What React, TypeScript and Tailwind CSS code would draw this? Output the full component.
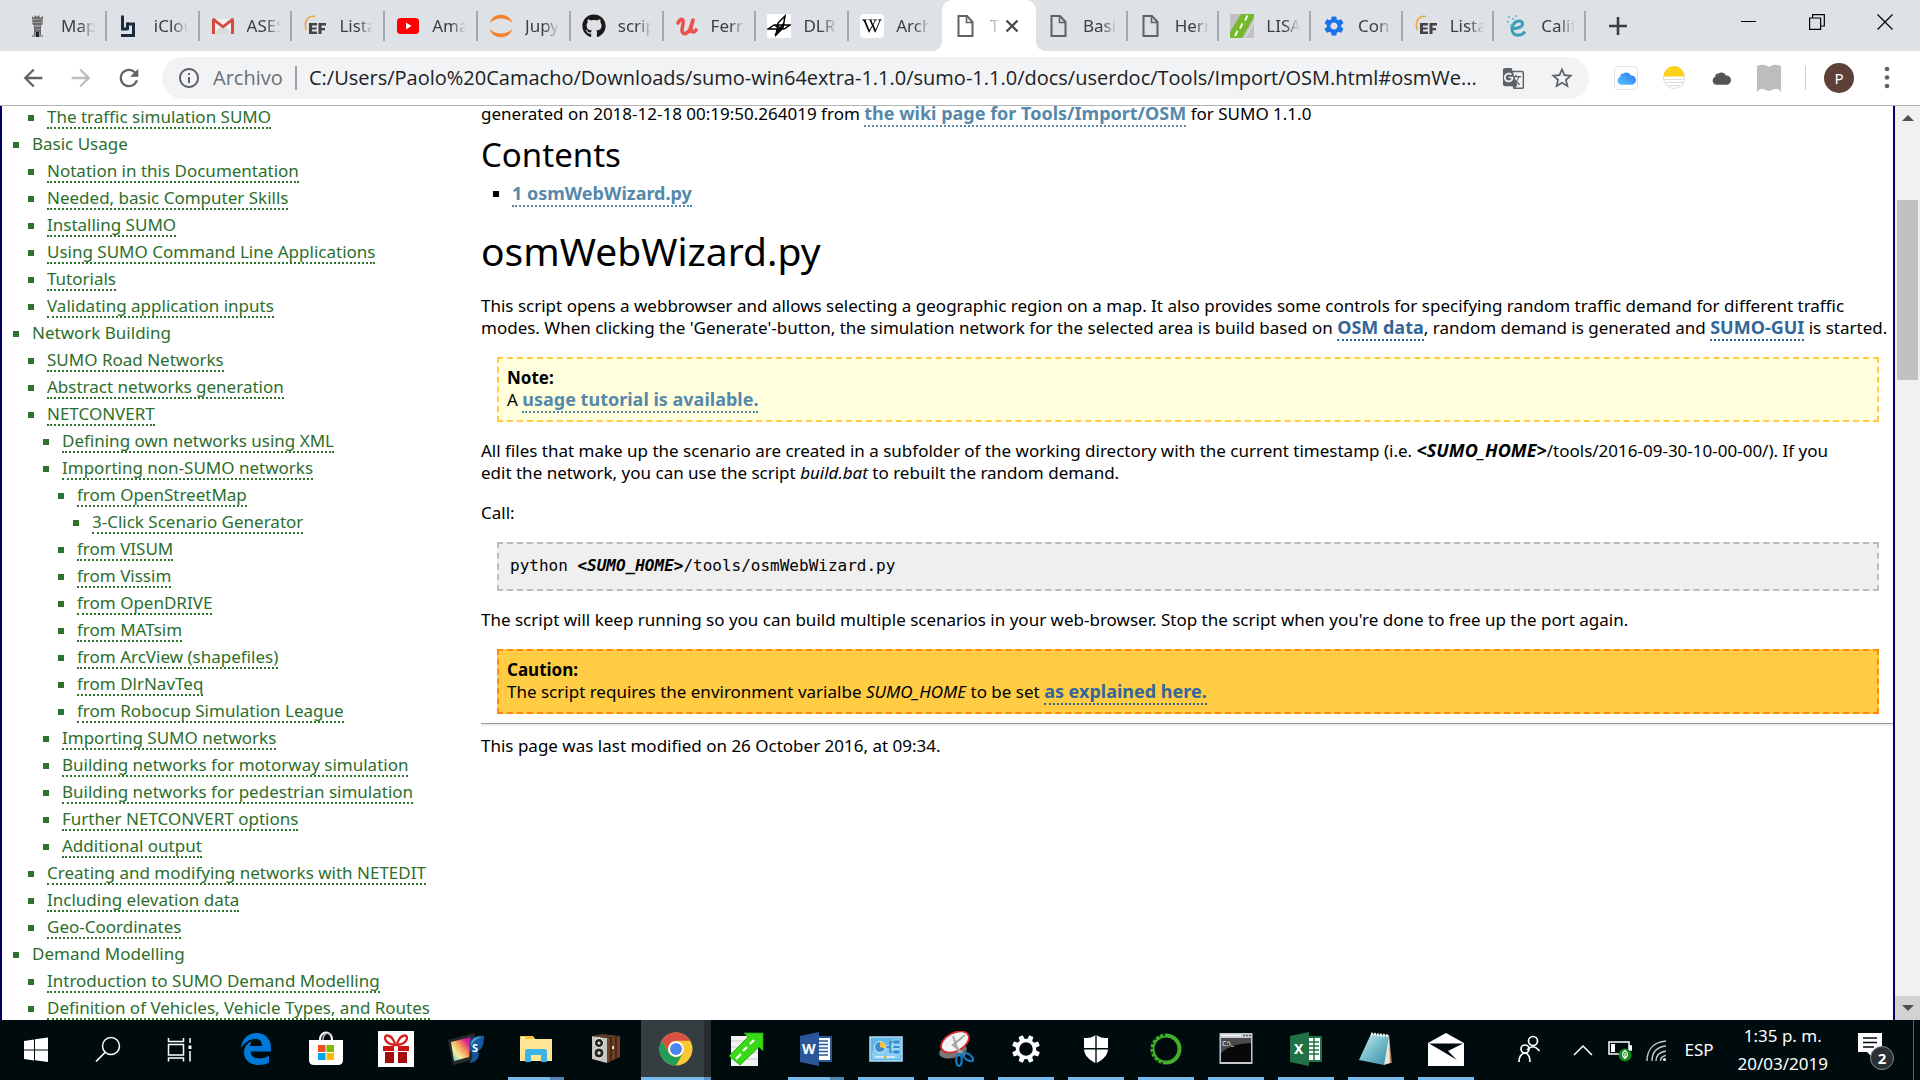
import React from 'react';
import type { ReactNode } from 'react';
import { FaGithub, FaWikipediaW } from 'react-icons/fa';
import { MdSettings, MdGTranslate, MdStarBorder, MdInfoOutline, MdRefresh, MdArrowBack, MdArrowForward } from 'react-icons/md';

/* ---------- favicons ---------- */

const TowerIcon = () => (
  <svg viewBox="0 0 24 24" className="size-6">
    <path d="M7 2l2 2 1-3 2 2 2-2 1 3 3-2v4H7z" fill="#6a6a6a" />
    <path d="M7 5h11v5l-2 2v9h2v2H7v-2h2v-9L7 10z" fill="#9a9a9a" />
    <path d="M8 7h9M8 10h9M9 14h7M9 17h7" stroke="#3c3c3c" strokeWidth="1.2" />
    <path d="M11 18h3v5h-3z" fill="#222" /><path d="M9.500 12v9M15.500 12v9" stroke="#666" />
  </svg>
);
const BlockIcon = () => (
  <svg viewBox="0 0 24 24" className="size-6" fill="#1b2a3f">
    <path d="M3 1.500h3v12h3.500v3H3z" /><path d="M9 8.500h8V23H3v-3h11v-8.500H9z" /><path d="M8 8.500h3V16H8z" />
  </svg>
);
const GmailIcon = () => (
  <svg viewBox="0 0 24 24" className="size-6">
    <path d="M2 5h20v15H2z" fill="#f1f1f1" /><path d="M2 20l8-8 2 2 2-2 8 8z" fill="#dcdcdc" />
    <path d="M1 6q0-2 2-2l9 7 9-7q2 0 2 2v14h-3V8.500l-8 6-8-6V20H1z" fill="#d54c3f" />
  </svg>
);
const EfIcon = () => (
  <svg viewBox="0 0 24 24" className="size-6">
    <path d="M12 2.500C5 1 0 8 3.500 16" fill="none" stroke="#f1a540" strokeWidth="1.600" />
    <path d="M6 9h8v2.500H9v2h4.500v2H9v2h5V20H6zM15.500 9H23v2.500h-4.500v2.500H22v2.300h-3.500V20h-3z" fill="#444" />
  </svg>
);
const YoutubeIcon = () => (
  <svg viewBox="0 0 24 24" className="size-6"><rect x="1" y="4" width="22" height="16" rx="3.500" fill="#f00" /><path d="M10 8.500v7l5.500-3.500z" fill="#fff" /></svg>
);
const JupyterIcon = () => (
  <svg viewBox="0 0 24 24" className="size-6" fill="#f5822a"><path d="M1 9C3-2 21-2 23 9 18 3 6 3 1 9z" /><path d="M1 15c2 11 20 11 22 0-5 6-17 6-22 0z" /></svg>
);
const UdemyIcon = () => (
  <svg viewBox="0 0 24 24" className="size-6" fill="none" stroke="#ea5252" strokeWidth="3.600" strokeLinecap="round" strokeLinejoin="round">
    <path d="M3 9C6 3 9 5 8 10l-1 6c0 5 5 5 8-1l3-9-2 8c0 5 3 5 5 2" />
  </svg>
);
const DlrIcon = () => (
  <svg viewBox="0 0 24 24" className="size-6">
    <rect width="24" height="24" fill="#fff" />
    <path d="M1 15l6-4h16l-6 4zM9 21l2-12 7-7-2 12zM7 11l9 4M8 21l9-12" fill="none" stroke="#000" strokeWidth="1.500" />
  </svg>
);
const WikiIcon = () => (
  <span className="flex size-6 items-center justify-center rounded bg-white"><FaWikipediaW className="size-5 text-black" /></span>
);
const DocIcon = () => (
  <svg viewBox="0 0 24 24" className="size-6" fill="none" stroke="#5f6368" strokeWidth="2"><path d="M4.500 2H13l5.500 6v14h-14z" /><path d="M12.500 2v6.500h6" strokeWidth="1.600" /></svg>
);
const RoadIcon = () => (
  <svg viewBox="0 0 24 24" className="size-6">
    <rect width="24" height="24" fill="#c3c0c3" /><path d="M0 24V18L11 0h13v3L12 24z" fill="#75b82a" />
    <path d="M5 22l2.500-5M10 14.500l2.500-5M15 6.500l2.500-5" stroke="#fff" strokeWidth="1.800" /><path d="M15 24L24 8" stroke="#e9e7e9" />
  </svg>
);
const ECircleIcon = () => (
  <svg viewBox="0 0 24 24" className="size-6" fill="none">
    <path d="M6 14.500C12 15 18 13 17.500 9.500 17 6 11 6 8 11c-3 6 1 11 6 10 3 0 5-2 6-3.500" stroke="#3f9fba" strokeWidth="3" />
    <path d="M3 3h2M7 5h2M2 8h2M10 2h2M5 11h1" stroke="#6fc4dd" strokeWidth="2" />
  </svg>
);

/* ---------- browser chrome ---------- */

type TabData = { title: string; icon: ReactNode };
const leftTabs: TabData[] = [
  { title: 'Map', icon: <TowerIcon /> },
  { title: 'iClou', icon: <BlockIcon /> },
  { title: 'ASES', icon: <GmailIcon /> },
  { title: 'Lista', icon: <EfIcon /> },
  { title: 'Ama', icon: <YoutubeIcon /> },
  { title: 'Jupy', icon: <JupyterIcon /> },
  { title: 'scrip', icon: <FaGithub className="size-6 text-[#1b1817]" /> },
  { title: 'Ferra', icon: <UdemyIcon /> },
  { title: 'DLR', icon: <DlrIcon /> },
  { title: 'Arch', icon: <WikiIcon /> },
];
const rightTabs: TabData[] = [
  { title: 'Basi', icon: <DocIcon /> },
  { title: 'Herr', icon: <DocIcon /> },
  { title: 'LISA', icon: <RoadIcon /> },
  { title: 'Con', icon: <MdSettings className="size-6 text-[#1a73e8]" /> },
  { title: 'Lista', icon: <EfIcon /> },
  { title: 'Calif', icon: <ECircleIcon /> },
];

function Tab({ tab, divider = true }: { tab: TabData; divider?: boolean }) {
  return (
    <button type="button" className="flex h-[51px] min-w-0 flex-1 items-center pl-[11px]">
      <span className="shrink-0">{tab.icon}</span>
      <span className="ml-3 w-[34px] overflow-hidden whitespace-nowrap text-left text-[17px] text-[#3c4043] [mask-image:linear-gradient(to_right,#000_55%,transparent)]">{tab.title}</span>
      <span className={divider ? 'ml-auto h-[30px] w-[2px] bg-[#a5a8ac]' : 'hidden'} />
    </button>
  );
}

function TabStrip() {
  return (
    <header className="flex h-[51px] shrink-0 bg-[#dee1e6] pl-[14px]">
      <nav aria-label="Tabs" className="flex">
        <div className="flex w-[928px]">
          {leftTabs.map((t, i) => <Tab key={i} tab={t} divider={i < leftTabs.length - 1} />)}
        </div>
        <div className="relative flex w-[94px] items-center rounded-t-[10px] bg-white pl-3">
          <span className="absolute -left-[10px] bottom-0 size-[10px] bg-[radial-gradient(circle_at_0_0,transparent_10px,#fff_10px)]" />
          <span className="absolute -right-[10px] bottom-0 size-[10px] bg-[radial-gradient(circle_at_100%_0,transparent_10px,#fff_10px)]" />
          <DocIcon />
          <span className="ml-3 w-3 overflow-hidden text-[17px] text-[#3c4043] [mask-image:linear-gradient(to_right,#0008,transparent)]">T</span>
          <button type="button" aria-label="Close tab" className="ml-[3px]">
            <svg viewBox="0 0 14 14" className="size-[14px]" stroke="#4a4d51" strokeWidth="2.400"><path d="M1.500 1.500l11 11M12.500 1.500l-11 11" /></svg>
          </button>
        </div>
        <div className="flex w-[550px]">
          {rightTabs.map((t, i) => <Tab key={i} tab={t} />)}
        </div>
      </nav>
      <button type="button" aria-label="New tab" className="ml-[23px] self-center">
        <svg viewBox="0 0 18 18" className="size-[18px]" stroke="#3c4043" strokeWidth="2.600"><path d="M9 0v18M0 9h18" /></svg>
      </button>
      <div className="ml-auto flex h-[43px] items-center gap-[52px] pr-[27px]">
        <button type="button" aria-label="Minimize"><svg viewBox="0 0 16 16" className="size-4" stroke="#000"><path d="M0 7.500h15" /></svg></button>
        <button type="button" aria-label="Restore"><svg viewBox="0 0 16 16" className="size-4" fill="none" stroke="#000" strokeWidth="1.200"><path d="M.6 4h11v11.400H.6zM3.600 4V.6h11.700V12h-3.500" /></svg></button>
        <button type="button" aria-label="Close"><svg viewBox="0 0 16 16" className="size-4" stroke="#000" strokeWidth="1.200"><path d="M.5.5l15 15M15.500.5l-15 15" /></svg></button>
      </div>
    </header>
  );
}

const cloudPath = 'M6 20a5 5 0 0 1-1-9.500A4 4 0 0 1 9 6.500 6 6 0 0 1 18 9a5.500 5.500 0 0 1 1 11z';

function Toolbar() {
  return (
    <div className="flex h-[55px] shrink-0 items-center border-b border-[#b4b4b4] bg-white pl-[19px] pr-[26px]">
      <button type="button" aria-label="Back"><MdArrowBack className="size-[28px] text-[#5f6368]" /></button>
      <button type="button" aria-label="Forward" className="ml-5"><MdArrowForward className="size-[28px] text-[#babcbe]" /></button>
      <button type="button" aria-label="Reload" className="ml-5"><MdRefresh className="size-[28px] text-[#5f6368]" /></button>
      <div className="ml-[19px] flex h-[42px] flex-1 items-center rounded-full bg-[#f1f3f4] pl-[15px] pr-[14px] font-['Open_Sans','Noto_Sans',sans-serif]">
        <MdInfoOutline className="size-6 text-[#5f6368]" />
        <label htmlFor="address" className="ml-3 w-[70px] whitespace-nowrap text-[20px] text-[#6b6f74]">Archivo</label>
        <span className="ml-3 h-6 w-[2px] bg-[#a0a3a7]" />
        <input
          id="address"
          type="text"
          className="ml-3 min-w-0 flex-1 bg-transparent text-[20px] text-[#202124] outline-none"
          defaultValue="C:/Users/Paolo%20Camacho/Downloads/sumo-win64extra-1.1.0/sumo-1.1.0/docs/userdoc/Tools/Import/OSM.html#osmWe..."
        />
        <button type="button" aria-label="Translate"><MdGTranslate className="size-[23px] text-[#5f6368]" /></button>
        <button type="button" aria-label="Bookmark" className="ml-6"><MdStarBorder className="size-[26px] text-[#5f6368]" /></button>
      </div>
      <div className="ml-[25px] flex items-center">
        <button type="button" aria-label="iCloud" className="flex size-6 items-center justify-center rounded border border-[#dfe2e8]">
          <svg viewBox="0 0 24 24" className="size-5">
            <defs><linearGradient id="cloud" x1="0" y1="1" x2="1" y2="0"><stop offset="0" stopColor="#5ac1fa" /><stop offset="1" stopColor="#2a7af5" /></linearGradient></defs>
            <path d={cloudPath} fill="url(#cloud)" />
          </svg>
        </button>
        <button type="button" aria-label="Notes" className="ml-6">
          <svg viewBox="0 0 24 24" className="size-6">
            <circle cx="12" cy="12" r="10.500" fill="#fff" stroke="#dcdcdc" />
            <path d="M1.500 10.500a10.500 10.500 0 0 1 21 0z" fill="#fdd01c" />
            <path d="M2 13.500h20M3 16.500h18M6 19.500h12" stroke="#dcdcdc" />
          </svg>
        </button>
        <button type="button" aria-label="Cloud" className="ml-[25px]">
          <svg viewBox="0 0 24 24" className="size-5"><path d={cloudPath} fill="#555" /></svg>
        </button>
        <button type="button" aria-label="Reader" className="ml-[26px]">
          <svg viewBox="0 0 24 28" className="h-[28px] w-6" fill="#bdbdbd"><path d="M0 2q7-3 12 1 5-4 12-1v26q-3-4-6-3t-6 2q-3-1-6-2t-6 3z" /></svg>
        </button>
      </div>
      <span className="ml-6 h-6 w-px bg-[#cfd1d4]" />
      <button type="button" className="ml-[18px] size-[30px] rounded-full bg-[#5d4037] text-[15px] text-white">P</button>
      <button type="button" aria-label="Menu" className="ml-[26px]">
        <svg viewBox="0 0 14 24" className="h-6 w-[14px]" fill="#5f6368"><circle cx="7" cy="3" r="2.300" /><circle cx="7" cy="11.500" r="2.300" /><circle cx="7" cy="20" r="2.300" /></svg>
      </button>
    </div>
  );
}

/* ---------- documentation page ---------- */

type Node = { label: string; plain?: boolean; children?: Node[] };
const tree: Node[] = [
  {
    label: 'Basic Usage', plain: true, children: [
      { label: 'Notation in this Documentation' },
      { label: 'Needed, basic Computer Skills' },
      { label: 'Installing SUMO' },
      { label: 'Using SUMO Command Line Applications' },
      { label: 'Tutorials' },
      { label: 'Validating application inputs' },
    ],
  },
  {
    label: 'Network Building', plain: true, children: [
      { label: 'SUMO Road Networks' },
      { label: 'Abstract networks generation' },
      {
        label: 'NETCONVERT', children: [
          { label: 'Defining own networks using XML' },
          {
            label: 'Importing non-SUMO networks', children: [
              { label: 'from OpenStreetMap', children: [{ label: '3-Click Scenario Generator' }] },
              { label: 'from VISUM' },
              { label: 'from Vissim' },
              { label: 'from OpenDRIVE' },
              { label: 'from MATsim' },
              { label: 'from ArcView (shapefiles)' },
              { label: 'from DlrNavTeq' },
              { label: 'from Robocup Simulation League' },
            ],
          },
          { label: 'Importing SUMO networks' },
          { label: 'Building networks for motorway simulation' },
          { label: 'Building networks for pedestrian simulation' },
          { label: 'Further NETCONVERT options' },
          { label: 'Additional output' },
        ],
      },
      { label: 'Creating and modifying networks with NETEDIT' },
      { label: 'Including elevation data' },
      { label: 'Geo-Coordinates' },
    ],
  },
  {
    label: 'Demand Modelling', plain: true, children: [
      { label: 'Introduction to SUMO Demand Modelling' },
      { label: 'Definition of Vehicles, Vehicle Types, and Routes' },
    ],
  },
];

function Branch({ nodes }: { nodes: Node[] }) {
  return (
    <ul className="pl-[15px]">
      {nodes.map((n) => (
        <li key={n.label}>
          <div className="flex h-[27px] items-center gap-[13px]">
            <span className="size-[6px] bg-[#2d732d]" />
            {n.plain ? <span className="pb-[2px] leading-[20px]">{n.label}</span> : <a href="#" className="border-b-2 border-dotted border-[#2d732d] leading-[20px]">{n.label}</a>}
          </div>
          {n.children && <Branch nodes={n.children} />}
        </li>
      ))}
    </ul>
  );
}

function Link({ children, dark = false }: { children: ReactNode; dark?: boolean }) {
  return (
    <a href="#" className={`border-b-2 border-dotted text-[18px] font-bold leading-[18px] ${dark ? 'border-[#336699] text-[#336699]' : 'border-[#5588aa] text-[#5588aa]'}`}>
      {children}
    </a>
  );
}

function Article() {
  return (
    <main className="-mt-[3px] min-w-0 flex-1 text-[17px] leading-[22px] text-black">
      <p>generated on 2018-12-18 00:19:50.264019 from <Link>the wiki page for Tools/Import/OSM</Link> for SUMO 1.1.0</p>
      <h2 className="mt-[10px] text-[33px] leading-[40px]">Contents</h2>
      <ul className="mt-2 pl-3">
        <li className="flex items-center gap-[13px]"><span className="size-[6px] bg-black" /><span><Link>1 osmWebWizard.py</Link></span></li>
      </ul>
      <h1 className="mt-[20px] text-[39px] leading-[52px]">osmWebWizard.py</h1>
      <p className="mt-[18px]">
        This script opens a webbrowser and allows selecting a geographic region on a map. It also provides some controls for specifying random traffic demand for different traffic modes. When clicking the 'Generate'-button, the simulation network for the selected area is build based on <Link dark>OSM data</Link>, random demand is generated and <Link dark>SUMO-GUI</Link> is started.
      </p>
      <div className="ml-4 mr-[14px] mt-[18px] border-2 border-dashed border-[#ffcc44] bg-[#ffffdd] px-2 pb-[9px] pt-2">
        <p className="font-bold">Note:</p>
        <p>A <Link>usage tutorial is available.</Link></p>
      </div>
      <p className="mt-[18px] pr-8">
        All files that make up the scenario are created in a subfolder of the working directory with the current timestamp (i.e. <b className="text-[18px] leading-[18px]"><i>&lt;SUMO_HOME&gt;</i></b>/tools/2016-09-30-10-00-00/). If you edit the network, you can use the script <i>build.bat</i> to rebuilt the random demand.
      </p>
      <p className="mt-[18px]">Call:</p>
      <pre className="ml-4 mr-[14px] mt-[18px] border-2 border-dashed border-[#bbbbbb] bg-[#efefef] px-[11px] pb-3 pt-[11px] font-['DejaVu_Sans_Mono',monospace] text-[16px] leading-[22px]">
        python <b><i>&lt;SUMO_HOME&gt;</i></b>/tools/osmWebWizard.py
      </pre>
      <p className="mt-[18px]">The script will keep running so you can build multiple scenarios in your web-browser. Stop the script when you're done to free up the port again.</p>
      <div className="ml-4 mr-[14px] mt-[18px] border-2 border-dashed border-[#ff8811] bg-[#ffcc44] px-2 pb-[9px] pt-2">
        <p className="font-bold">Caution:</p>
        <p>The script requires the environment varialbe <i>SUMO_HOME</i> to be set <Link dark>as explained here.</Link></p>
      </div>
      <hr className="mt-[9px] h-[3px] border-0 border-t border-[#999] bg-[#eee]" />
      <p className="mt-[9px]">This page was last modified on 26 October 2016, at 09:34.</p>
    </main>
  );
}

function ScrollBar() {
  return (
    <div className="flex w-[25px] shrink-0 flex-col items-center bg-[#f1f1f1]">
      <div className="flex h-6 w-full items-center justify-center"><svg viewBox="0 0 12 6" className="h-[6px] w-3" fill="#505050"><path d="M0 6L6 0l6 6z" /></svg></div>
      <div className="mt-[70px] h-[180px] w-[21px] bg-[#c1c1c1]" />
      <div className="mt-auto flex h-6 w-full items-center justify-center bg-[#d2d2d2]"><svg viewBox="0 0 12 6" className="h-[6px] w-3" fill="#505050"><path d="M0 0h12L6 6z" /></svg></div>
    </div>
  );
}

/* ---------- taskbar ---------- */

const I = ({ children, box = '0 0 36 36' }: { children: ReactNode; box?: string }) => <svg viewBox={box} className="size-9">{children}</svg>;

const WindowsIcon = () => <I><path d="M6 9l10-1.500v10H6zM17 7.300L30 5.500v12H17zM6 18.500h10v10L6 27zM17 18.500h13V30l-13-1.700z" fill="#fff" /></I>;
const SearchIcon = () => <I><circle cx="21" cy="14" r="8.500" fill="none" stroke="#fff" strokeWidth="1.500" /><path d="M15.500 20L6 29.500" stroke="#fff" strokeWidth="1.700" /></I>;
const TaskViewIcon = () => (
  <I><path d="M6.500 6v3.500h15V6M6.500 12.500h15V23h-15zM6.500 29.500V26h15v3.500M28 6v5M28 19v10.500" fill="none" stroke="#fff" strokeWidth="1.500" /><path d="M26.500 13.500h3v3.500h-3z" fill="#fff" /></I>
);
const EdgeIcon = () => (
  <I><path d="M3 17C4 7 11 2 18.500 2 28 2 33 9 33 16v4.500H12.500c.5 5 4 7 9 7 4 0 7-1.300 9.500-2.700v7C28 33.500 24.500 34 20.500 34 12 34 6 29 6 21.500c0-6 4-10 8-11.500-1.300 1.500-1.700 3-2 5H24c0-4.500-2-7-7-7-5.500 0-11 4-14 9z" fill="#0078d7" /></I>
);
const StoreIcon = () => (
  <I><path d="M12 9c0-10 12-10 12 0" fill="none" stroke="#fff" strokeWidth="2" /><path d="M15 9c0-7 6-9 9-4" fill="none" stroke="#bbb" strokeWidth="1.500" /><path d="M1 9h34v20q0 5-5 5H6q-5 0-5-5z" fill="#fff" />
    <path d="M10 14h7.500v7H10z" fill="#f25022" /><path d="M18.500 14H26v7h-7.500z" fill="#7fba00" /><path d="M10 22h7.500v7H10z" fill="#00a4ef" /><path d="M18.500 22H26v7h-7.500z" fill="#ffb900" /></I>
);
const GiftIcon = () => (
  <I><path d="M0 0h36v36H0z" fill="#fff" /><path d="M17 14C6 13 5 4 9.500 4.500 14 5 17 11 17 14zm2 0c11-1 12-10 7.500-9.500C22 5 19 11 19 14z" fill="none" stroke="#d61f1f" strokeWidth="2.300" />
    <path d="M5 15h11v5H5zm15 0h11v5H20z" fill="#c91414" /><path d="M7 21h9v11H7zm13 0h9v11h-9z" fill="#a50d0d" /></I>
);
const PaintIcon = () => (
  <I>
    <defs><linearGradient id="rainbow" x1="0" y1="1" x2="1" y2="0"><stop offset="0" stopColor="#48c9f0" /><stop offset=".3" stopColor="#f3f19a" /><stop offset=".55" stopColor="#f59a5b" /><stop offset=".8" stopColor="#e21f8d" /><stop offset="1" stopColor="#7527a8" /></linearGradient></defs>
    <path d="M0 9l27-7-2 27-20 5z" fill="#292929" /><path d="M3 11l20-5-2 20-15 4z" fill="url(#rainbow)" />
    <path d="M36 5c-13-2-18 8-13 15 3 4 1 9-2 12 9-1 11-7 9-12 5-2 6-8 6-15z" fill="#155a9e" /><path d="M34 6c-8 0-11 3-11 9 2-5 5-7 11-9z" fill="#5ea6d8" />
    <text x="24" y="21" fontSize="11" fontWeight="700" fill="#fff">S</text>
  </I>
);
const ExplorerIcon = () => (
  <I><path d="M2 6q0-1 1-1h12l2 3h17v22H2z" fill="#ffe694" /><path d="M2 6q0-1 1-1h12v3H2z" fill="#f5c431" /><path d="M3 6h4v1.500H3z" fill="#fff" /><path d="M7 31V20q0-2 2-2h18q2 0 2 2v11h-6v-7H13v7z" fill="#3db3e6" /></I>
);
const SpeakerIcon = () => (
  <I><path d="M4 5l15 2v25L4 28z" fill="#c9c5bf" /><path d="M4 5l10-2 18 2-13 2z" fill="#5b3f2c" /><path d="M19 7l13-2v21l-13 6z" fill="#6f4227" /><path d="M23 6.500v23M28 6v22" stroke="#3b2112" strokeWidth="1.500" /><path d="M24 15h2v3h-2z" fill="#ddd" />
    <circle cx="11" cy="12" r="4.500" fill="#222" stroke="#eee" /><circle cx="11" cy="22" r="5" fill="#222" stroke="#eee" /><circle cx="11" cy="12" r="1.500" fill="#ddd" /><circle cx="11" cy="22" r="1.700" fill="#ddd" /></I>
);
const ChromeIcon = () => (
  <I><circle cx="18" cy="18" r="16.500" fill="#fcc934" /><path d="M3.700 9.800A16.500 16.500 0 0 1 32.300 9.800H18A8.200 8.200 0 0 0 10.900 22z" fill="#d94f43" /><path d="M3.700 9.800L10.900 22.100A8.200 8.200 0 0 0 25.100 22.100L18 34.500A16.500 16.500 0 0 1 3.700 9.800z" fill="#249c5a" />
    <circle cx="18" cy="18" r="7.700" fill="#fff" /><circle cx="18" cy="18" r="6" fill="#4a87f0" /></I>
);
const SumoIcon = () => (
  <I><path d="M3 5h27v30H3z" fill="#f2f2f2" /><path d="M3 10h27M3 16h27M3 22h27M3 28h27" stroke="#ccc" /><path d="M1 25L20 6l-4-4h19v18l-4-4L12 34z" fill="#38d916" stroke="#1da305" strokeWidth=".8" /><path d="M8 28l5-5M15 20l4-4M22 13l4-4" stroke="#fff" strokeWidth="2.400" /></I>
);
const WordIcon = () => (
  <I><path d="M17 5h16q1 0 1 1v24q0 1-1 1H17z" fill="#2b579a" /><path d="M19 7h13v22H19z" fill="#fff" /><path d="M19 10h11M19 13.500h11M19 17h11M19 20.500h11M19 24h11" stroke="#2b579a" strokeWidth="1.500" /><path d="M2 5l19-4v34L2 31z" fill="#2b579a" />
    <text x="4" y="23" fontSize="14" fontWeight="700" fill="#fff">W</text></I>
);
const PanelIcon = () => (
  <I><rect x="2" y="6" width="32" height="24" fill="#5db8ea" stroke="#b5dcf5" strokeWidth="1.500" /><path d="M4 20L32 8v20H4z" fill="#84ccf2" /><circle cx="12" cy="16" r="5.500" fill="#3b8ed0" stroke="#d8effb" /><path d="M12 16v-5.500a5.500 5.500 0 0 1 5 7z" fill="#ffbf3d" />
    <path d="M18 16h4V11h3M22 16v5h3" stroke="#14679e" fill="none" /><path d="M25 9h7v4h-7zM25 14.500h7v3h-7zM25 19h7v4h-7z" fill="#2e8fd0" stroke="#cdeafa" strokeWidth=".7" /><path d="M7 26h20" stroke="#e7f5fd" strokeWidth="1.500" /><circle cx="17" cy="26" r="1.300" fill="#f1a12b" /></I>
);
const SnipIcon = () => (
  <I><ellipse cx="15" cy="20" rx="14" ry="7" fill="#777" transform="rotate(-12 15 20)" /><ellipse cx="17" cy="11" rx="15" ry="9" fill="#f4f4f4" stroke="#d8282f" strokeWidth="1.800" transform="rotate(-28 17 11)" />
    <path d="M15 5l7 20M27 4L15 14l12 10" stroke="#a7a7a7" strokeWidth="2" fill="none" /><ellipse cx="21" cy="29" rx="2.800" ry="6" fill="none" stroke="#1579c0" strokeWidth="2.200" /><ellipse cx="30" cy="26" rx="2.800" ry="6" fill="none" stroke="#1579c0" strokeWidth="2.200" transform="rotate(-55 30 26)" /></I>
);
const GearIcon = () => (
  <I>
    <g fill="#fff">
      {[0, 45, 90, 135, 180, 225, 270, 315].map((a) => <path key={a} d="M15.300 9L15.800 4h4.400l.5 5z" transform={`rotate(${a + 22.5} 18 18)`} />)}
    </g>
    <circle cx="18" cy="18" r="8.500" fill="none" stroke="#fff" strokeWidth="3.400" />
  </I>
);
const ShieldIcon = () => <I><path d="M17.300 4C14 7 10 7 6 7v10h11.300zM18.700 4C22 7 26 7 30 7v10H18.700zM6 18.500h11.300V32C10 28 6.500 24 6 18.500zM30 18.500H18.700V32C26 28 29.500 24 30 18.500z" fill="#fff" /></I>;
const AnacondaIcon = () => (
  <I><circle cx="18" cy="18" r="13.500" fill="none" stroke="#43b02a" strokeWidth="4" /><path d="M17 3.500C-1 4 -1 32 17 32.500" fill="none" stroke="#0a2a0a" strokeWidth="2.400" strokeDasharray="2 3" /></I>
);
const CmdIcon = () => (
  <I><rect x="1.500" y="2" width="33" height="31" fill="#c5c9d0" /><rect x="3" y="7" width="30" height="24" fill="#080808" /><path d="M3 7h30v5Q14 12 3 22z" fill="#4b4b4b" /><path d="M3 4.500h20" stroke="#f2f2f2" strokeWidth="1.500" /><path d="M25 4.500h8" stroke="#666" strokeWidth="1.500" strokeDasharray="2 1" />
    <text x="4" y="15" fontSize="7" fill="#fff">C:\_</text></I>
);
const ExcelIcon = () => (
  <I><path d="M17 5h16q1 0 1 1v24q0 1-1 1H17z" fill="#207245" /><path d="M19 7h13v22H19z" fill="#fff" /><path d="M19 11h12M19 15h12M19 19h12M19 23h12M26 7v22" stroke="#207245" strokeWidth="1.500" /><path d="M2 5l19-4v34L2 31z" fill="#207245" />
    <text x="6" y="23" fontSize="14" fontWeight="700" fill="#fff">X</text></I>
);
const NotepadIcon = () => (
  <I>
    <defs><linearGradient id="pad" x1="0" y1="0" x2="1" y2="1"><stop offset="0" stopColor="#d7f0f6" /><stop offset=".5" stopColor="#73bccb" /><stop offset="1" stopColor="#3b8ea5" /></linearGradient></defs>
    <path d="M31 4l3 28-8 1z" fill="#a9763f" /><path d="M13 3l18 1-5 30L1 29z" fill="url(#pad)" /><path d="M31 4l-5 30 6-2z" fill="#dfe7e9" /><path d="M13 3l18 2" stroke="#eee" strokeWidth="3" strokeDasharray="2 1" />
  </I>
);
const MailIcon = () => (
  <I><path d="M0 12L18 2l18 10v23H0z" fill="#fff" /><path d="M1 12.500h34L20 20l9 9-15-9z" fill="#000a0d" /></I>
);

const appIcons: { name: string; icon: ReactNode; state?: 'open' | 'multi' | 'active' }[] = [
  { name: 'Edge', icon: <EdgeIcon /> },
  { name: 'Store', icon: <StoreIcon /> },
  { name: 'Gifts', icon: <GiftIcon /> },
  { name: 'Paint', icon: <PaintIcon /> },
  { name: 'Explorer', icon: <ExplorerIcon />, state: 'multi' },
  { name: 'Speakers', icon: <SpeakerIcon /> },
  { name: 'Chrome', icon: <ChromeIcon />, state: 'active' },
  { name: 'SUMO', icon: <SumoIcon /> },
  { name: 'Word', icon: <WordIcon />, state: 'multi' },
  { name: 'Control panel', icon: <PanelIcon />, state: 'open' },
  { name: 'Snipping tool', icon: <SnipIcon />, state: 'open' },
  { name: 'Settings', icon: <GearIcon />, state: 'open' },
  { name: 'Defender', icon: <ShieldIcon />, state: 'open' },
  { name: 'Anaconda', icon: <AnacondaIcon />, state: 'open' },
  { name: 'Command prompt', icon: <CmdIcon />, state: 'open' },
  { name: 'Excel', icon: <ExcelIcon />, state: 'open' },
  { name: 'Notepad', icon: <NotepadIcon />, state: 'open' },
  { name: 'Mail', icon: <MailIcon />, state: 'open' },
];

function AppButton({ name, icon, state }: (typeof appIcons)[number]) {
  const active = state === 'active';
  return (
    <button type="button" aria-label={name} className={`flex w-[70px] flex-col items-center ${active ? 'bg-linear-to-r from-[#343d40] from-90% to-[#262c2e] to-90%' : ''}`}>
      <span className="flex flex-1 items-center">{icon}</span>
      <span className={`flex h-[3px] ${active ? 'w-full' : 'w-14'}`}>
        {state && <span className="flex-1 bg-[#76b9ed]" />}
        {(active || state === 'multi') && <span className={active ? 'w-[7px] bg-[#5a93c4]' : 'w-[14px] bg-[#5584b0]'} />}
      </span>
    </button>
  );
}

function Taskbar() {
  return (
    <footer className="flex h-[60px] shrink-0 bg-[#000b0e] text-white">
      {[['Start', <WindowsIcon />], ['Search', <SearchIcon />], ['Task view', <TaskViewIcon />]].map(([n, ic]) => (
        <button key={n as string} type="button" aria-label={n as string} className="flex w-[72px] items-center justify-center">{ic}</button>
      ))}
      <div className="ml-[5px] flex">{appIcons.map((a) => <AppButton key={a.name} {...a} />)}</div>
      <div className="ml-auto flex items-center">
        <button type="button" aria-label="People">
          <svg viewBox="0 0 24 30" className="h-[30px] w-6" fill="none" stroke="#fff" strokeWidth="1.700">
            <circle cx="16" cy="6" r="4.500" /><path d="M10 15q6-7 12.500 1" /><circle cx="8" cy="14" r="4" /><path d="M2 27q0-8 6-9 5 1 5 9" />
          </svg>
        </button>
        <button type="button" aria-label="Hidden icons" className="ml-8"><svg viewBox="0 0 20 12" className="h-3 w-5" fill="none" stroke="#fff" strokeWidth="1.500"><path d="M1 11l9-9 9 9" /></svg></button>
        <svg viewBox="0 0 24 26" className="ml-[15px] h-[26px] w-6">
          <path d="M1 5h20v12H1zM22 9h1.500v4H22z" fill="none" stroke="#fff" strokeWidth="1.500" /><path d="M3 7h4v8H3z" fill="#fff" />
          <circle cx="17" cy="18" r="6.500" fill="#11871d" /><path d="M17 13.500q5 4 0 8-5-4 0-8zM17 16v6" fill="none" stroke="#fff" strokeWidth="1.200" />
        </svg>
        <svg viewBox="0 0 24 24" className="ml-3 size-6" fill="none" stroke="#c8c8c8" strokeWidth="1.400">
          <path d="M3 23C3 11 10 4 22 3M8 23c0-9 5-14 14-15M12 23c0-6 4-9 10-10M16.500 23c0-3 2-5 5.500-5.500" /><circle cx="20.500" cy="21.500" r="1.500" fill="#fff" stroke="none" />
        </svg>
        <span className="ml-4 text-[17px]">ESP</span>
        <time className="ml-6 text-center text-[17px] leading-[28px]">1:35 p. m.<br />20/03/2019</time>
        <button type="button" aria-label="2 notifications" className="relative ml-[30px] h-9 w-9">
          <svg viewBox="0 0 36 36" className="size-9"><path d="M0 1h24v19h-9v6l-6-6H0z" fill="#fff" /><path d="M5 6h14M5 10.500h14M5 15h11" stroke="#000b0e" strokeWidth="1.600" /></svg>
          <span className="absolute left-3 top-[14px] flex size-6 items-center justify-center rounded-full border border-[#888] bg-[#2b3133] text-[15px] font-bold">2</span>
        </button>
      </div>
      <span className="ml-[19px] mr-[6px] w-px bg-[#5c6466]" />
    </footer>
  );
}

export default function App() {
  return (
    <div className="flex h-screen flex-col overflow-hidden bg-white font-['Noto_Sans','Open_Sans',sans-serif]">
      <TabStrip />
      <Toolbar />
      <div className="flex min-h-0 flex-1">
        <div className="flex min-w-0 flex-1 overflow-hidden border-x-2 border-[#000066]">
          <nav aria-label="Documentation" className="-mt-[2px] w-[479px] shrink-0 whitespace-nowrap text-[17px] text-[#2d6e2d]">
            <div className="-ml-1 pl-[15px]"><Branch nodes={[{ label: 'The traffic simulation SUMO' }]} /></div>
            <div className="-ml-1"><Branch nodes={tree} /></div>
          </nav>
          <Article />
        </div>
        <ScrollBar />
      </div>
      <Taskbar />
    </div>
  );
}
